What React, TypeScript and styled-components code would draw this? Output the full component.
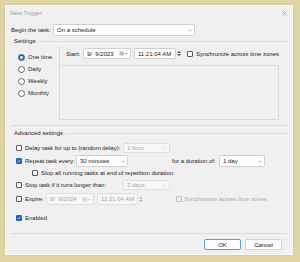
import React from 'react';
import styled, { createGlobalStyle } from 'styled-components';

const GlobalStyle = createGlobalStyle`
  html, body {
    margin: 0;
    background: #e0d3a4;
  }
  body {
    font-family: 'Liberation Sans', Arial, sans-serif;
    font-size: 6px;
    line-height: 1;
    color: #222;
  }
`;

const Page = styled.div`
  width: 300px;
  height: 262px;
  padding: 6px 0 0 6px;
  box-sizing: border-box;
`;

const Window = styled.div`
  width: 286px;
  height: 248px;
  background: #f0f0f0;
  box-shadow: 0 0 0 1px #fafafa, 0 0 3px rgba(0, 0, 0, 0.18);
  display: flex;
  flex-direction: column;
`;

const TitleBar = styled.div`
  height: 14px;
  display: flex;
  align-items: center;
  justify-content: space-between;
  padding: 0 5px 0 4px;
  color: #a0a0a0;
`;

const Content = styled.div`
  padding: 0 4px 0 5px;
  display: flex;
  flex-direction: column;
`;

const Row = styled.div<{ $top?: number; $h?: number; $left?: number }>`
  display: flex;
  align-items: center;
  margin-top: ${p => p.$top ?? 0}px;
  height: ${p => p.$h ?? 10}px;
  padding-left: ${p => p.$left ?? 0}px;
`;

const Label = styled.span<{ $w?: number; $disabled?: boolean; $ml?: number }>`
  ${p => (p.$w ? `width: ${p.$w}px; flex: none;` : '')}
  margin-left: ${p => p.$ml ?? 0}px;
  color: ${p => (p.$disabled ? '#a8a8a8' : 'inherit')};
  white-space: pre;
`;

const GroupHeader = styled.div<{ $top: number }>`
  display: flex;
  align-items: center;
  height: 8px;
  margin-top: ${p => p.$top}px;
  padding-left: 3px;
  gap: 3px;
  &::after {
    content: '';
    flex: 1;
    border-top: 1px solid #dcdcdc;
    margin-top: 1px;
  }
`;

const SettingsBody = styled.div`
  display: flex;
  height: 80px;
  border-bottom: 1px solid #dcdcdc;
`;

const RadioCol = styled.div`
  width: 49px;
  margin: 2px 0 5px;
  padding-top: 4px;
  border-right: 1px solid #d8d8d8;
  display: flex;
  flex-direction: column;
`;

const RadioItem = styled.label`
  display: flex;
  align-items: center;
  height: 12px;
  padding-left: 7px;
  gap: 3px;
`;

const RadioDot = styled.span<{ $checked?: boolean }>`
  width: 7px;
  height: 7px;
  box-sizing: border-box;
  border-radius: 50%;
  flex: none;
  border: 1px solid ${p => (p.$checked ? '#1d5fb0' : '#666')};
  background: ${p => (p.$checked ? 'radial-gradient(circle, #fff 0 1.3px, #1d5fb0 1.6px)' : '#fff')};
`;

const RightCol = styled.div`
  flex: 1;
  margin: 0 9px 0 0;
  display: flex;
  flex-direction: column;
`;

const InnerBox = styled.div`
  margin: 6px 0 5px -1px;
  flex: 1;
  border: 1px solid #dadada;
  border-left: none;
`;

const Field = styled.div<{ $w: number; $disabled?: boolean }>`
  width: ${p => p.$w}px;
  height: 100%;
  box-sizing: border-box;
  flex: none;
  display: flex;
  align-items: center;
  padding: 0 2px 0 3px;
  background: ${p => (p.$disabled ? '#f7f7f7' : '#fff')};
  border: 1px solid ${p => (p.$disabled ? '#dedede' : '#cfcfcf')};
  border-radius: 1.5px;
  color: ${p => (p.$disabled ? '#a8a8a8' : 'inherit')};
  white-space: pre;
`;

const FieldText = styled.span`
  flex: 1;
`;

const Spin = styled.div<{ $disabled?: boolean }>`
  width: 6px;
  height: 100%;
  flex: none;
  display: flex;
  flex-direction: column;
  align-items: center;
  justify-content: center;
  gap: 1px;
  svg {
    fill: ${p => (p.$disabled ? '#b5b5b5' : '#555')};
  }
`;

const Box = styled.span<{ $checked?: boolean; $disabled?: boolean }>`
  width: 6px;
  height: 6px;
  flex: none;
  box-sizing: border-box;
  border-radius: 1px;
  border: 1px solid ${p => (p.$checked ? '#1d63c2' : p.$disabled ? '#bcbcbc' : '#5c5c5c')};
  background: ${p => (p.$checked ? '#1d63c2' : p.$disabled ? '#f4f4f4' : '#fff')};
  display: flex;
  align-items: center;
  justify-content: center;
`;

const Advanced = styled.div`
  height: 96px;
  padding-left: 5px;
  border-bottom: 1px solid #dcdcdc;
  display: flex;
  flex-direction: column;
`;

const Footer = styled.div`
  display: flex;
  justify-content: flex-end;
  gap: 4px;
  margin-top: 5px;
  padding-right: 6px;
`;

const Button = styled.button<{ $primary?: boolean }>`
  width: 37px;
  height: 11px;
  padding: 0;
  font: inherit;
  color: #222;
  background: #fdfdfd;
  border: 1px solid ${p => (p.$primary ? '#5b9bd8' : '#d2d2d2')};
  border-radius: 2px;
`;

const Chevron = ({ color = '#777' }: { color?: string }) => (
  <svg width="4" height="3" viewBox="0 0 8 5">
    <path d="M1 1l3 3 3-3" fill="none" stroke={color} strokeWidth="1.2" />
  </svg>
);

const Check = () => (
  <svg width="4" height="4" viewBox="0 0 8 8">
    <path d="M1.2 4.2l2 2 3.8-4.6" fill="none" stroke="#fff" strokeWidth="1.4" />
  </svg>
);

const Combo = ({ w, text, disabled }: { w: number; text: string; disabled?: boolean }) => (
  <Field $w={w} $disabled={disabled}>
    <FieldText>{text}</FieldText>
    <Chevron color={disabled ? '#c2c2c2' : '#777'} />
  </Field>
);

const Calendar = ({ disabled }: { disabled?: boolean }) => (
  <svg width="9" height="5" viewBox="0 0 18 10">
    <rect x="1" y="1" width="9" height="8" fill={disabled ? '#d8d8d8' : '#b9b9b9'} />
    <path d="M12 4l2.5 2.5L17 4" fill="none" stroke={disabled ? '#c0c0c0' : '#555'} strokeWidth="1.4" />
  </svg>
);

const Spinner = ({ disabled }: { disabled?: boolean }) => (
  <Spin $disabled={disabled}>
    <svg width="4" height="2" viewBox="0 0 4 2"><path d="M0 2L2 0l2 2z" /></svg>
    <svg width="4" height="2" viewBox="0 0 4 2"><path d="M0 0l2 2 2-2z" /></svg>
  </Spin>
);

const CheckBox = ({ checked, disabled }: { checked?: boolean; disabled?: boolean }) => (
  <Box $checked={checked} $disabled={disabled}>{checked && <Check />}</Box>
);

const App: React.FC = () => {
  const radios = ['One time', 'Daily', 'Weekly', 'Monthly'];

  return (
    <Page>
      <GlobalStyle />
      <Window>
        <TitleBar>
          <span>New Trigger</span>
          <svg width="5" height="5" viewBox="0 0 10 10">
            <path d="M1 1l8 8M9 1l-8 8" stroke="#9c9c9c" strokeWidth="1.3" />
          </svg>
        </TitleBar>

        <Content>
          <Row $top={4} $h={12}>
            <Label $w={42}>Begin the task:</Label>
            <Combo w={142} text="On a schedule" />
          </Row>

          <GroupHeader $top={1}>Settings</GroupHeader>
          <SettingsBody>
            <RadioCol>
              {radios.map((r, i) => (
                <RadioItem key={r}>
                  <RadioDot $checked={i === 0} />
                  {r}
                </RadioItem>
              ))}
            </RadioCol>
            <RightCol>
              <Row $top={3} $h={11} $left={6}>
                <Label $w={17}>Start:</Label>
                <Field $w={48}>
                  <FieldText>{'9/  9/2023'}</FieldText>
                  <Calendar />
                </Field>
                <Field $w={42} style={{ marginLeft: 3 }}>
                  <FieldText>11:21:04 AM</FieldText>
                </Field>
                <Spinner />
                <Label $ml={5} />
                <CheckBox />
                <Label $ml={3}>Synchronize across time zones</Label>
              </Row>
              <InnerBox />
            </RightCol>
          </SettingsBody>

          <GroupHeader $top={3}>Advanced settings</GroupHeader>
          <Advanced>
            <Row $top={6} $h={10}>
              <CheckBox />
              <Label $ml={3} $w={98}>Delay task for up to (random delay):</Label>
              <Combo w={47} text="1 hour" disabled />
            </Row>
            <Row $top={2} $h={12}>
              <CheckBox checked />
              <Label $ml={3} $w={51}>Repeat task every:</Label>
              <Combo w={52} text="30 minutes" />
              <Label $ml={44} $w={47}>for a duration of:</Label>
              <Combo w={46} text="1 day" />
            </Row>
            <Row $top={1} $h={10} $left={16}>
              <CheckBox />
              <Label $ml={3}>Stop all running tasks at end of repetition duration</Label>
            </Row>
            <Row $top={2} $h={10}>
              <CheckBox />
              <Label $ml={3} $w={98}>Stop task if it runs longer than:</Label>
              <Combo w={47} text="3 days" disabled />
            </Row>
            <Row $top={3} $h={12}>
              <CheckBox />
              <Label $ml={3} $w={21}>Expire:</Label>
              <Field $w={48} $disabled>
                <FieldText>{'9/  9/2024'}</FieldText>
                <Calendar disabled />
              </Field>
              <Field $w={41} $disabled style={{ marginLeft: 3 }}>
                <FieldText>11:21:04 AM</FieldText>
              </Field>
              <Spinner disabled />
              <Label $ml={32} />
              <CheckBox disabled />
              <Label $ml={2} $disabled>Synchronize across time zones</Label>
            </Row>
            <Row $top={8} $h={10}>
              <CheckBox checked />
              <Label $ml={3}>Enabled</Label>
            </Row>
          </Advanced>

          <Footer>
            <Button $primary>OK</Button>
            <Button>Cancel</Button>
          </Footer>
        </Content>
      </Window>
    </Page>
  );
};

export default App;
